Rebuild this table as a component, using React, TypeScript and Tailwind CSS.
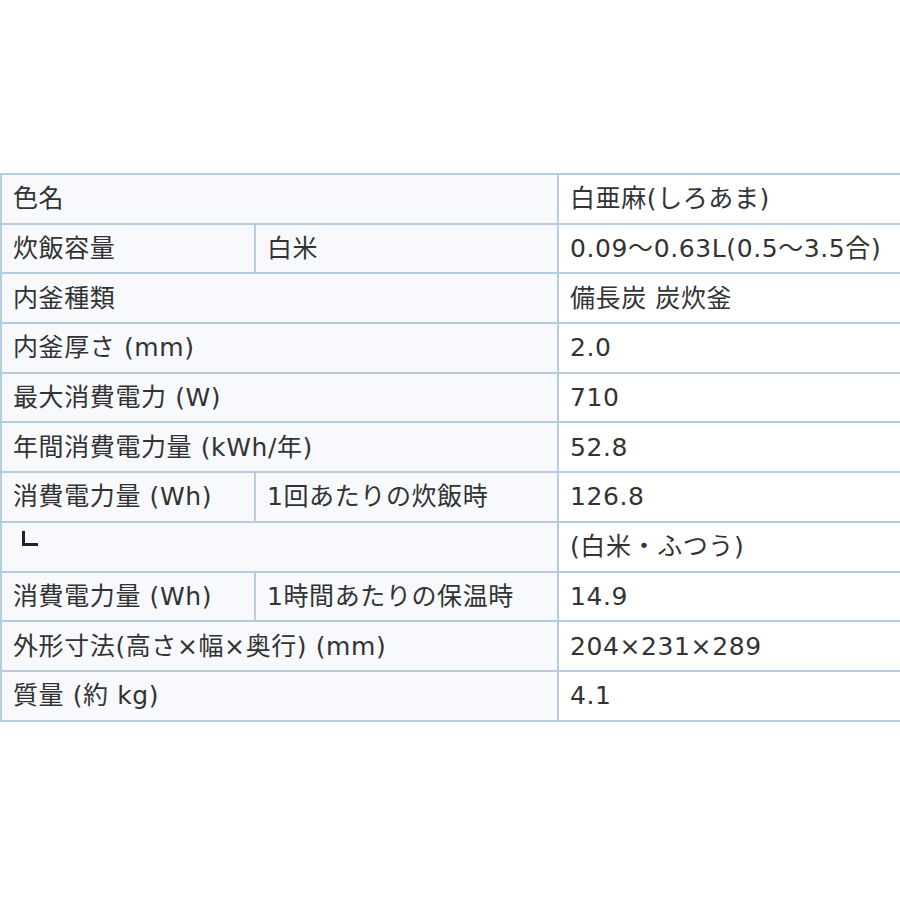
import React from 'react';

type Row = { label: string; sub?: string; value: string; mark?: boolean };

const rows: Row[] = [
  { label: '色名', value: '白亜麻(しろあま)' },
  { label: '炊飯容量', sub: '白米', value: '0.09～0.63L(0.5～3.5合)' },
  { label: '内釜種類', value: '備長炭 炭炊釜' },
  { label: '内釜厚さ (mm)', value: '2.0' },
  { label: '最大消費電力 (W)', value: '710' },
  { label: '年間消費電力量 (kWh/年)', value: '52.8' },
  { label: '消費電力量 (Wh)', sub: '1回あたりの炊飯時', value: '126.8' },
  { label: '', value: '(白米・ふつう)', mark: true },
  { label: '消費電力量 (Wh)', sub: '1時間あたりの保温時', value: '14.9' },
  { label: '外形寸法(高さ×幅×奥行) (mm)', value: '204×231×289' },
  { label: '質量 (約 kg)', value: '4.1' },
];

const cell = 'border-2 border-[#b6cde0] px-[11px] align-middle whitespace-nowrap';

export default function App() {
  return (
    <div
      className="w-[900px] h-[900px] overflow-hidden bg-white pt-[173px] text-[25px] tracking-[0.6px] leading-none text-[#333333]"
      style={{ fontFamily: '"DejaVu Sans", "Noto Sans CJK JP", sans-serif' }}
    >
      <table className="w-[910px] border-collapse table-fixed">
        <colgroup>
          <col className="w-[254px]" />
          <col className="w-[303px]" />
          <col />
        </colgroup>
        <tbody>
          {rows.map((r, i) => (
            <tr key={i} className="h-[49.7px]">
              {r.sub ? (
                <>
                  <td className={`${cell} bg-[#f7f9fc]`}>{r.label}</td>
                  <td className={`${cell} bg-[#f7f9fc]`}>{r.sub}</td>
                </>
              ) : r.mark ? (
                <td colSpan={2} className={`${cell} bg-[#f7f9fc] !align-top pt-[8px]`}>
                  <span className="ml-[9px] block h-[15px] w-[16px] border-b-[3px] border-l-[3px] border-[#222222]" />
                </td>
              ) : (
                <td colSpan={2} className={`${cell} bg-[#f7f9fc]`}>{r.label}</td>
              )}
              <td className={`${cell} bg-white`}>{r.value}</td>
            </tr>
          ))}
        </tbody>
      </table>
    </div>
  );
}
